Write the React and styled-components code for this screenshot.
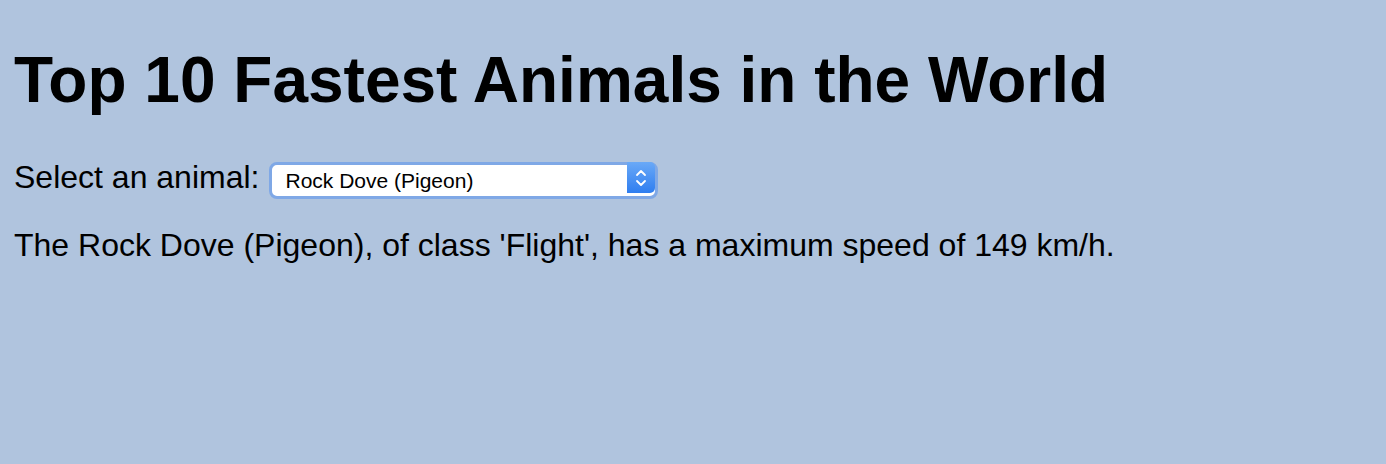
import React, { useState } from 'react';
import styled, { createGlobalStyle } from 'styled-components';

const animals = [
  { name: 'Peregrine Falcon', cls: 'Flight', speed: 389 },
  { name: 'Golden Eagle', cls: 'Flight', speed: 320 },
  { name: 'Gyrfalcon', cls: 'Flight', speed: 209 },
  { name: 'Swift', cls: 'Flight', speed: 171 },
  { name: 'Eurasian Hobby', cls: 'Flight', speed: 160 },
  { name: 'Frigatebird', cls: 'Flight', speed: 153 },
  { name: 'Rock Dove (Pigeon)', cls: 'Flight', speed: 149 },
  { name: 'Spur-winged Goose', cls: 'Flight', speed: 142 },
  { name: 'Red-breasted Merganser', cls: 'Flight', speed: 129 },
  { name: 'Grey-headed Albatross', cls: 'Flight', speed: 127 },
];

const GlobalStyle = createGlobalStyle`
  html, body {
    margin: 0;
    background: #b0c4de;
  }
  body {
    padding: 16px 14px;
    font-family: "Liberation Sans", Helvetica, Arial, sans-serif;
    color: #000;
  }
`;

const Title = styled.h1`
  font-size: 64px;
  font-weight: bold;
  margin: 27px 0 42px;
`;

const Row = styled.div`
  display: flex;
  align-items: center;
  font-size: 32px;
  gap: 10px;
`;

const SelectWrap = styled.div`
  position: relative;
  width: 389px;
  height: 37px;
`;

const Select = styled.select`
  appearance: none;
  width: 100%;
  height: 100%;
  box-sizing: border-box;
  border: 3px solid #7fa8e6;
  border-radius: 8px;
  background: #fff;
  font-family: "Liberation Sans", Helvetica, Arial, sans-serif;
  font-size: 21px;
  color: #000;
  padding: 0 0 0 13px;
  outline: none;
`;

const Stepper = styled.span`
  position: absolute;
  top: 3px;
  right: 3px;
  bottom: 3px;
  width: 28px;
  border-radius: 0 5px 5px 0;
  background: linear-gradient(#6aa9f7, #2f7ef0);
  display: flex;
  align-items: center;
  justify-content: center;
  pointer-events: none;
`;

const Info = styled.p`
  font-size: 32px;
  margin: 31px 0 0;
`;

const App = () => {
  const [idx, setIdx] = useState(6);
  const a = animals[idx];
  return (
    <>
      <GlobalStyle />
      <Title>Top 10 Fastest Animals in the World</Title>
      <Row>
        <span>Select an animal:</span>
        <SelectWrap>
          <Select value={idx} onChange={(e) => setIdx(Number(e.target.value))}>
            {animals.map((x, i) => (
              <option key={x.name} value={i}>{x.name}</option>
            ))}
          </Select>
          <Stepper>
            <svg width="12" height="22" viewBox="0 0 12 22" fill="none" stroke="#fff" strokeWidth="1.8" strokeLinecap="round" strokeLinejoin="round">
              <path d="M2 8 L6 4 L10 8" />
              <path d="M2 14 L6 18 L10 14" />
            </svg>
          </Stepper>
        </SelectWrap>
      </Row>
      <Info>
        The {a.name}, of class '{a.cls}', has a maximum speed of {a.speed} km/h.
      </Info>
    </>
  );
};

export default App;
